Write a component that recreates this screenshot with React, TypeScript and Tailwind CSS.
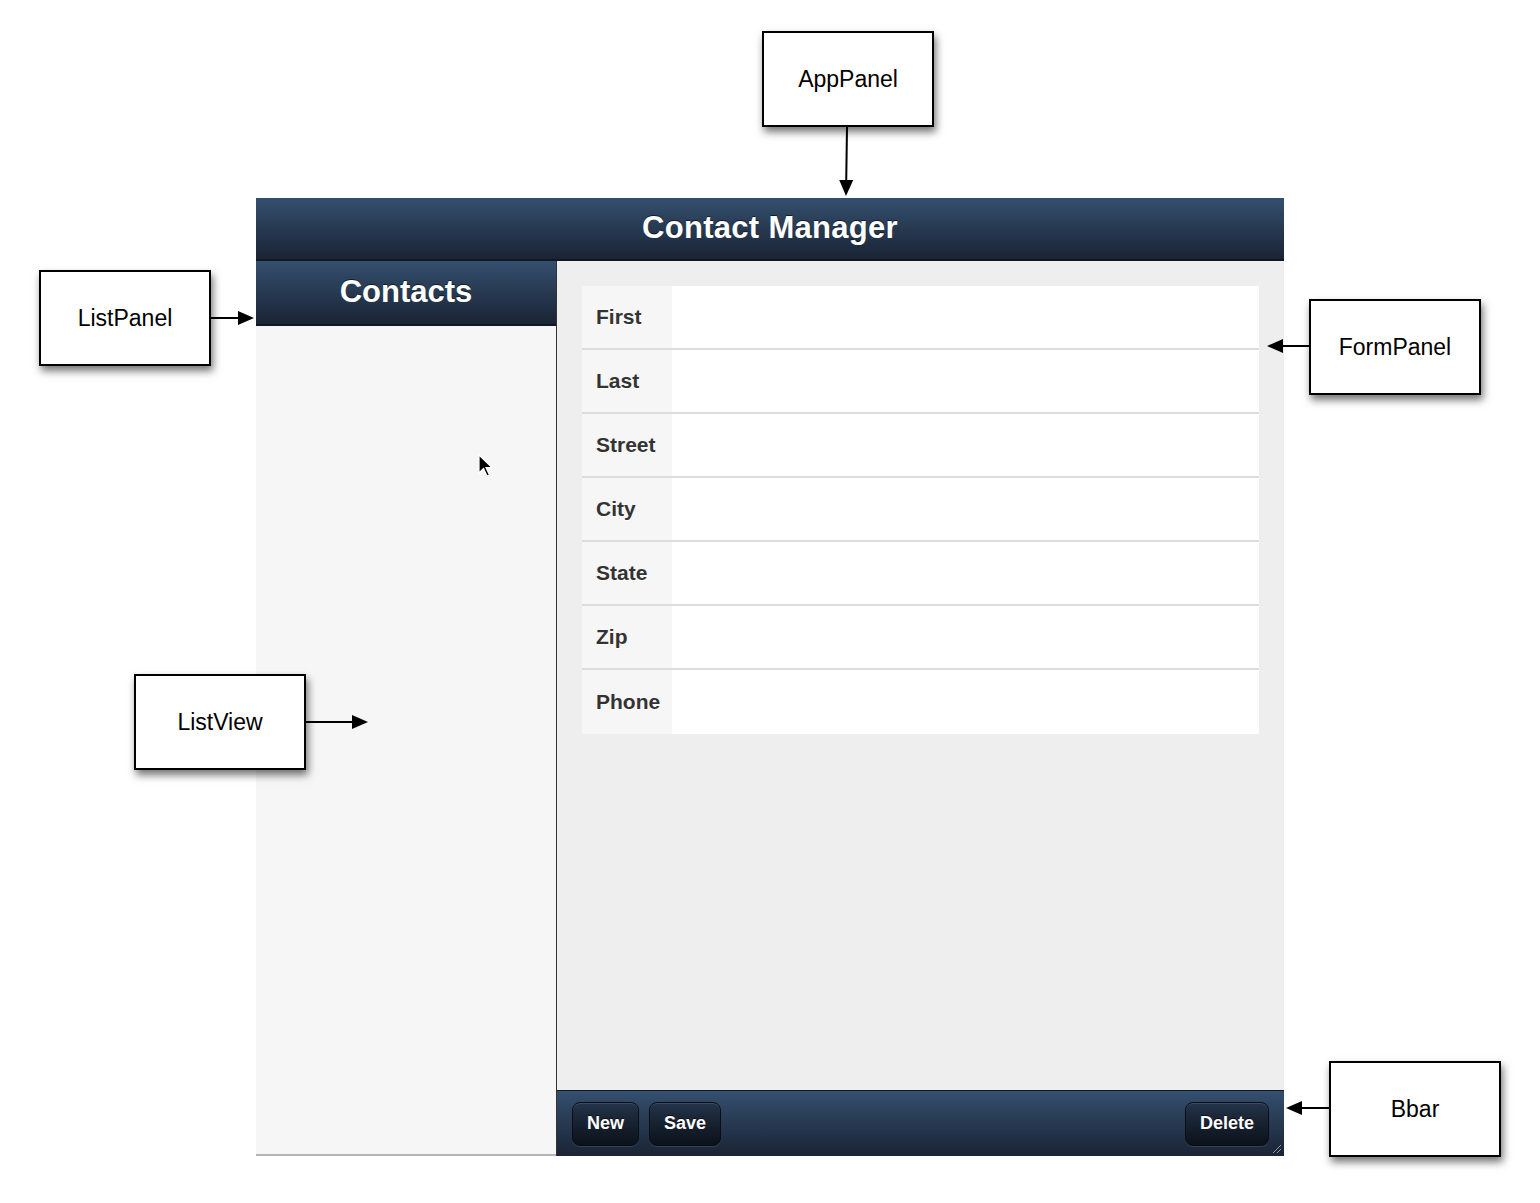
import React from "react";

const font = { fontFamily: '"Liberation Sans", Arial, Helvetica, sans-serif' };

interface NoteProps {
  label: string;
  className: string;
}

// annotation box on the diagram canvas
function Note({ label, className }: NoteProps) {
  return (
    <div
      className={`absolute flex h-[96px] w-[172px] items-center justify-center border-2 border-black bg-white text-[23px] text-black shadow-[2px_5px_8px_rgba(0,0,0,0.55)] ${className}`}
    >
      {label}
    </div>
  );
}

function Arrow({ x1, y1, x2, y2 }: { x1: number; y1: number; x2: number; y2: number }) {
  const ang = Math.atan2(y2 - y1, x2 - x1);
  const len = 16;
  const w = 7;
  const bx = x2 - Math.cos(ang) * len;
  const by = y2 - Math.sin(ang) * len;
  const px = -Math.sin(ang) * w;
  const py = Math.cos(ang) * w;
  return (
    <g>
      <line x1={x1} y1={y1} x2={bx} y2={by} stroke="black" strokeWidth="2" />
      <polygon points={`${x2},${y2} ${bx + px},${by + py} ${bx - px},${by - py}`} fill="black" />
    </g>
  );
}

const fields = ["First", "Last", "Street", "City", "State", "Zip", "Phone"];

function BarButton({ children }: { children: React.ReactNode }) {
  return (
    <button className="h-[44px] rounded-[8px] border border-[#0a0f16] bg-gradient-to-b from-[#24344a] to-[#0b1119] px-[14px] text-[18px] font-bold text-white shadow-[inset_0_1px_0_rgba(255,255,255,0.12),0_1px_0_rgba(255,255,255,0.1)] [text-shadow:0_-1px_0_rgba(0,0,0,0.7)]">
      {children}
    </button>
  );
}

export default function App() {
  return (
    <div className="relative h-[1203px] w-[1540px] overflow-hidden bg-white" style={font}>
      {/* app panel */}
      <div className="ml-[256px] pt-[198px]">
        <div className="flex h-[958px] w-[1028px] flex-col">
          <div className="flex h-[63px] items-center justify-center border-b-2 border-[#111820] bg-gradient-to-b from-[#34506f] to-[#1a2435]">
            <span className="text-[31px] font-bold tracking-[0.3px] text-white [text-shadow:0_-1px_0_rgba(0,0,0,0.6)]">Contact Manager</span>
          </div>
          <div className="flex flex-1">
            <div className="flex w-[300px] flex-col border-b-2 border-[#b5b5b5] bg-[#f6f6f6]">
              <div className="flex h-[65px] items-center justify-center border-b-2 border-[#111820] bg-gradient-to-b from-[#34506f] to-[#1a2435]">
                <span className="text-[31px] font-bold text-white [text-shadow:0_-1px_0_rgba(0,0,0,0.6)]">Contacts</span>
              </div>
              <div className="flex-1" />
            </div>
            <div className="flex flex-1 flex-col border-l border-[#333] bg-[#eeeeee]">
              <div className="flex-1 px-[25px] pt-[25px]">
                <div className="flex flex-col">
                  {fields.map((f, i) => (
                    <div
                      key={f}
                      className={`flex h-[64px] ${i < fields.length - 1 ? "border-b-2 border-[#dddddd]" : ""}`}
                    >
                      <div className="flex w-[90px] items-center bg-[#f6f6f6] pl-[14px] text-[21px] font-bold text-[#333] [text-shadow:0_1px_0_#fff]">
                        {f}
                      </div>
                      <div className="flex-1 bg-white" />
                    </div>
                  ))}
                </div>
              </div>
              <div className="relative flex h-[66px] items-center gap-[10px] border-t border-[#111820] bg-gradient-to-b from-[#34506f] to-[#1a2435] px-[15px]">
                <BarButton>New</BarButton>
                <BarButton>Save</BarButton>
                <div className="flex-1" />
                <BarButton>Delete</BarButton>
                <svg className="absolute bottom-[2px] right-[2px]" width="12" height="12" viewBox="0 0 12 12">
                  <line x1="11" y1="3" x2="3" y2="11" stroke="#8a96a6" strokeWidth="1" />
                  <line x1="11" y1="7" x2="7" y2="11" stroke="#8a96a6" strokeWidth="1" />
                </svg>
              </div>
            </div>
          </div>
        </div>
      </div>

      {/* mouse cursor */}
      <svg className="absolute left-[478px] top-[454px]" width="16" height="26" viewBox="0 0 16 26">
        <path d="M1 1 L1 19 L5.5 14.5 L9 22 L11.5 21 L8 13.5 L14 13.5 Z" fill="black" stroke="white" strokeWidth="1.2" />
      </svg>

      {/* annotations */}
      <svg className="absolute left-0 top-0" width="1540" height="1203">
        <Arrow x1={847} y1={127} x2={846} y2={196} />
        <Arrow x1={210} y1={318} x2={254} y2={318} />
        <Arrow x1={1309} y1={346} x2={1267} y2={346} />
        <Arrow x1={306} y1={722} x2={368} y2={722} />
        <Arrow x1={1329} y1={1108} x2={1286} y2={1108} />
      </svg>
      <Note label="AppPanel" className="left-[762px] top-[31px]" />
      <Note label="ListPanel" className="left-[39px] top-[270px]" />
      <Note label="FormPanel" className="left-[1309px] top-[299px]" />
      <Note label="ListView" className="left-[134px] top-[674px]" />
      <Note label="Bbar" className="left-[1329px] top-[1061px]" />
    </div>
  );
}
